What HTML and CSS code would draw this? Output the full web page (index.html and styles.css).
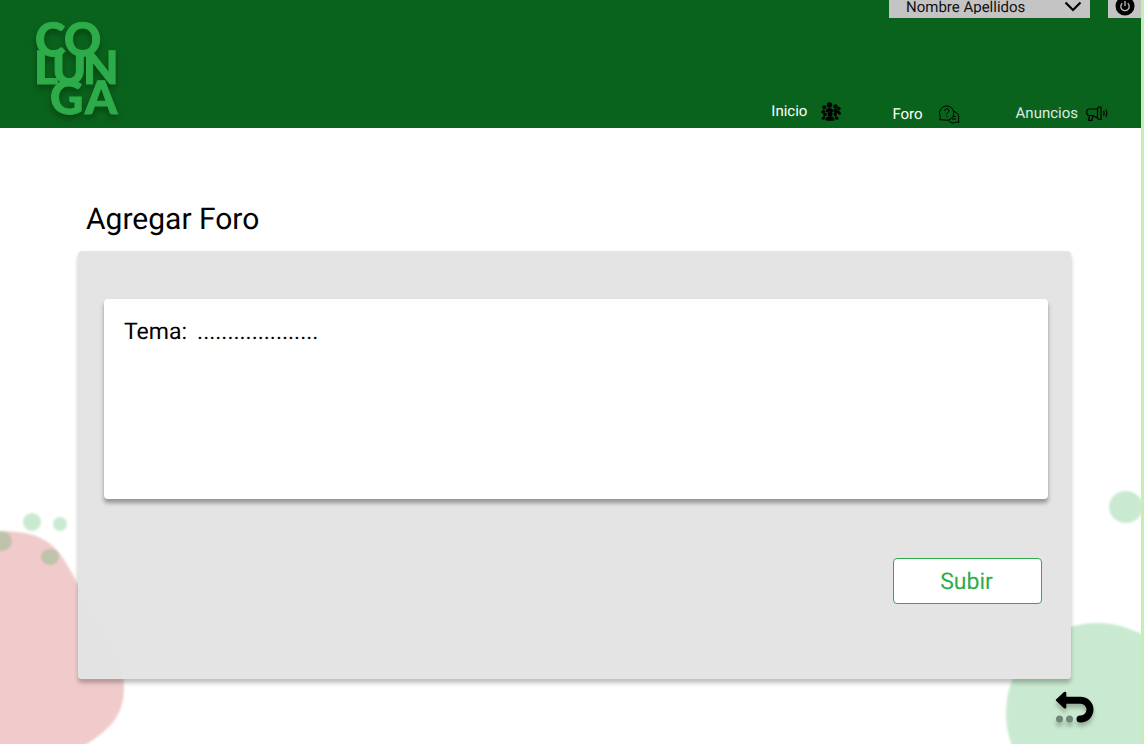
FILE: index.html
```html
<!DOCTYPE html>
<html lang="es">
<head>
<meta charset="utf-8">
<meta name="viewport" content="width=device-width, initial-scale=1">
<title>Agregar Foro</title>
<link rel="stylesheet" href="styles.css">
</head>
<body>
<div class="page">
  <header class="header">
    <a class="logo" href="#" aria-label="Colunga">
      <svg width="90" height="104" viewBox="0 0 90 104">
        <text class="logo-text" x="0 29" y="39">CO</text>
        <text class="logo-text" x="-1 17 48" y="67">LUN</text>
        <text class="logo-text" x="15 50" y="97">GA</text>
      </svg>
    </a>
    <div class="header-side">
      <div class="account">
        <div class="select-wrap">
          <select class="user-select" aria-label="Usuario"><option>Nombre Apellidos</option></select>
          <svg class="chevron" width="18" height="11" viewBox="0 0 18 11"><path d="M1.500 1.500 9 9l7.500-7.500" fill="none" stroke="#000" stroke-width="2.200"/></svg>
        </div>
        <button class="power" type="button" aria-label="Salir">
          <svg width="20" height="20" viewBox="0 0 20 20"><circle cx="10" cy="10" r="9.500"/><path d="M7.300 7.300a4.200 4.200 0 1 0 5.400 0M10 5v5" fill="none" stroke="#c4c4c4" stroke-width="1.300"/></svg>
        </button>
      </div>
      <nav class="nav">
        <a class="nav-link nav-home" href="#">Inicio
          <svg width="20" height="20" viewBox="0 0 20 20">
            <circle cx="8.500" cy="4" r="2.700"/><circle cx="3.300" cy="6.300" r="2"/><circle cx="14.500" cy="5.600" r="2.300"/><circle cx="18" cy="7.500" r="1.700"/>
            <path d="M4.500 10.500c.3-2 1.800-3.500 4-3.500s3.800 1.500 4 3.500l-1.200 1-2.800-1-2.800 1zM.3 12c0-2 1.200-3.500 3-3.500l1 2.200-.8 2zM12.500 8.200q3.500-.8 5 1.500l-1.500 2.800-2.800-.8zM17.300 9.500q2.400.5 2.700 4h-2.800l-.8-2z"/>
            <circle cx="9" cy="13" r="2.500"/><circle cx="4" cy="13.500" r="1.800"/><circle cx="14.200" cy="13.500" r="1.800"/>
            <path d="M4.400 19.200c0-2.600 1.600-4 4.600-4s4.600 1.400 4.600 4q-4.600 1.200-9.200 0zM.6 18.200c0-2 1-3 2.800-3l1.200.6-1.200 3q-1.600 0-2.800-.6zM17.700 18.200c0-2-1-3-2.800-3l-1.300.6 1.200 3q1.700 0 2.900-.6z"/>
          </svg>
        </a>
        <a class="nav-link nav-forum" href="#">Foro
          <svg width="22" height="20" viewBox="0 0 22 20" fill="none" stroke="#000" stroke-width="1">
            <path d="M2.300 15.500.8 16l.5-3.500A7.200 7.200 0 1 1 5.500 16q-1.700.2-3.200-.5z"/>
            <path d="M15 7.500a5.800 5.800 0 0 1 4.500 7.500l.5 3.500-2.600-.5a5.700 5.700 0 0 1-8.200-2.200"/>
            <path d="M5.700 7c0-3.200 4.300-2.800 4.200-.2 0 1.700-2.200 1.500-2.200 3.400M7.700 11.700v1.200M14 12.500h3M13 15h4"/>
          </svg>
        </a>
        <a class="nav-link nav-news" href="#">Anuncios
          <svg width="22" height="16" viewBox="0 0 22 16" fill="none" stroke="#000" stroke-width="1.200">
            <path d="M11.500 4H3.500C1.500 4 .7 5.300.7 7.200s.8 3.300 2.800 3.300h3.200l4.800 2.500zM3.500 10.500l-1 4.800H6l.8-4.800M11.500 4 12.500 2H15v12.500h-2.500l-1-1.500M17.500 6q1.200 2.300 0 4.500M19.800 4.500q2 3.800 0 7.500"/>
          </svg>
        </a>
      </nav>
    </div>
  </header>

  <main class="main">
    <svg class="blob blob-left" width="140" height="254" viewBox="0 0 140 254" aria-hidden="true">
      <path class="blob-red" d="M-10 42C20 40 40 42 58 61C72 80 80 100 96 126C112 148 124 168 124 197C124 228 108 240 84 256V280H-10z"/>
      <g class="blob-green"><circle cx="32" cy="32" r="9"/><circle cx="60" cy="34" r="7"/><circle cx="2" cy="51" r="10"/><ellipse cx="50" cy="67" rx="9" ry="8"/></g>
    </svg>
    <svg class="blob blob-right" width="141" height="264" viewBox="0 0 141 264" aria-hidden="true">
      <g class="blob-green"><ellipse cx="126" cy="27" rx="17" ry="16"/><path d="M6 234C6 180 48 143 98 143C115 143 130 148 150 158V280H18Q6 256 6 234z"/></g>
    </svg>

    <h1 class="title">Agregar Foro</h1>
    <form class="panel">
      <div class="card">
        <label class="label" for="topic">Tema:</label>
        <input class="topic" id="topic" type="text" value="....................">
      </div>
      <button class="submit" type="button">Subir</button>
    </form>
    <button class="back" type="button" aria-label="Volver">
      <svg width="40" height="34" viewBox="0 0 40 34">
        <path d="M10 9.200h15.600a9.400 9.400 0 0 1 0 18.800h-.6" fill="none" stroke="#000" stroke-width="7" stroke-linecap="round"/>
        <path d="M1.300 8.300 9 1q2.300-1 2.300 1v14q0 2.300-2.300 1.300L1.300 10q-.8-.8 0-1.700z"/>
        <g class="dots"><circle cx="4.500" cy="28" r="3.500"/><circle cx="14.500" cy="28" r="3.500"/></g>
      </svg>
    </button>
  </main>
</div>
</body>
</html>
```
FILE: styles.css
```css
* { box-sizing: border-box; }

body {
  margin: 0;
  background: #fff;
  font-family: Roboto, "Liberation Sans", sans-serif;
  color: #000;
  text-rendering: geometricPrecision;
}

.page {
  min-height: 100vh;
  display: flex;
  flex-direction: column;
  border-right: 3px solid #c3efb4;
}

.header {
  display: flex;
  justify-content: space-between;
  height: 128px;
  background: #0a631c;
}

.logo { padding: 17px 0 0 35px; }
.logo svg { display: block; overflow: visible; filter: drop-shadow(0 4px 3px rgba(0, 0, 0, .3)); }
.logo-text {
  font-family: Lato, sans-serif;
  font-size: 46px;
  font-weight: 900;
  fill: #2dac49;
  stroke: #2dac49;
  stroke-width: 1px;
}

.header-side {
  display: flex;
  flex-direction: column;
  justify-content: space-between;
  align-items: flex-end;
}

.account { display: flex; gap: 18px; height: 18px; }
.select-wrap { position: relative; width: 201px; }
.user-select {
  display: block;
  width: 100%;
  height: 18px;
  padding: 0 32px 4px 17px;
  border: 0;
  border-radius: 0;
  background: #c4c4c4;
  color: #111;
  font: 15px/14px Roboto, sans-serif;
  text-rendering: geometricPrecision;
  appearance: none;
}
.chevron { position: absolute; right: 8px; top: 1px; pointer-events: none; }

.power {
  display: flex;
  align-items: flex-end;
  justify-content: center;
  width: 33px;
  height: 18px;
  padding: 0 0 2px;
  border: 0;
  background: #c4c4c4;
  overflow: hidden;
}
.power svg { flex: none; }

.nav { display: flex; align-items: flex-end; padding-right: 33px; }
.nav-link {
  display: flex;
  align-items: center;
  color: #fff;
  font-size: 15px;
  line-height: 20px;
  text-decoration: none;
}
.nav-home { gap: 14px; margin-right: 51px; padding-bottom: 7px; }
.nav-forum { gap: 16px; margin-right: 55px; padding-bottom: 4px; }
.nav-news { gap: 8px; padding-bottom: 5px; color: #dfe8e0; }

.main {
  position: relative;
  flex: 1;
  display: flex;
  flex-direction: column;
  padding: 72px 70px 16px 78px;
  overflow: hidden;
}

.blob { position: absolute; }
.blob-left { left: 0; top: 362px; }
.blob-right { right: 0; top: 352px; }
.blob-red { fill: #f1cbcc; filter: blur(1px); }
.blob-green { fill: #2dac49; fill-opacity: .26; filter: blur(1px); }

.title {
  position: relative;
  margin: 0;
  padding-left: 8px;
  font-size: 30px;
  font-weight: 400;
  line-height: 40px;
}

.panel {
  position: relative;
  display: flex;
  flex-direction: column;
  margin-top: 11px;
  padding: 48px 23px 75px 26px;
  border-radius: 4px;
  background: rgba(227, 227, 227, .98);
  box-shadow: 0 4px 4px rgba(0, 0, 0, .25);
}

.card {
  display: flex;
  align-items: flex-start;
  gap: 10px;
  min-height: 200px;
  padding: 18px 20px;
  border-radius: 4px;
  background: #fff;
  box-shadow: 0 4px 4px rgba(0, 0, 0, .35);
}
.label { font-size: 23px; line-height: 30px; }
.topic {
  flex: 1;
  height: 30px;
  padding: 0;
  border: 0;
  background: transparent;
  font: 23px/30px Roboto, sans-serif;
  text-rendering: geometricPrecision;
  color: #000;
}

.submit {
  align-self: flex-end;
  width: 149px;
  height: 46px;
  margin: 59px 6px 0 0;
  padding: 2px 2px 0 0;
  border: 1px solid #2dac49;
  border-radius: 4px;
  background: #fff;
  color: #2dac49;
  font: 23px/30px Roboto, sans-serif;
  text-rendering: geometricPrecision;
}

.back {
  position: relative;
  align-self: flex-end;
  height: 34px;
  margin: 12px -24px 0 0;
  padding: 0;
  border: 0;
  background: none;
}
.back svg { display: block; filter: drop-shadow(0 4px 2px rgba(0, 0, 0, .25)); }
.dots { fill: #6f8775; }
```
